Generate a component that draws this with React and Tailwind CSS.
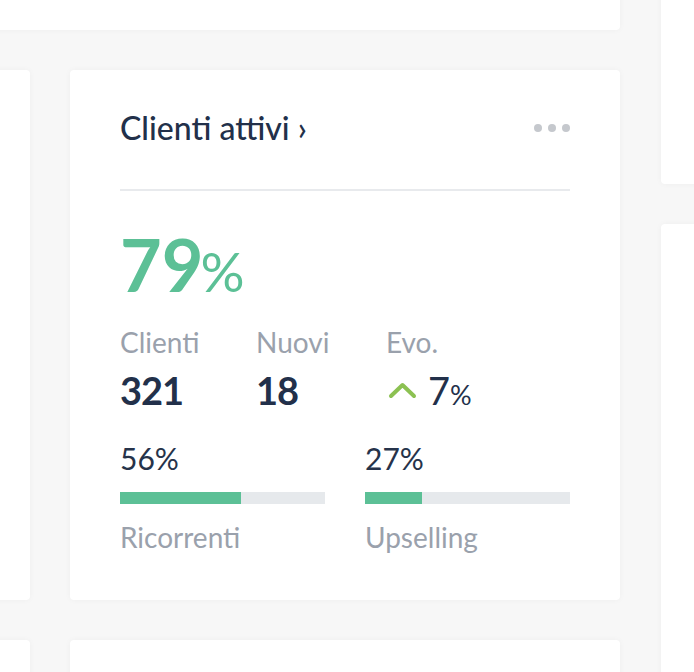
import React from "react";

function Card({ className = "", children }) {
  return (
    <div className={`shrink-0 bg-white rounded-[4px] shadow-[0_0_6px_rgba(0,0,0,0.04)] ${className}`}>
      {children}
    </div>
  );
}

function Bar({ value, label, pct }) {
  return (
    <div className="flex-1">
      <div className="text-[30px] leading-none text-[#26334a]">{value}</div>
      <div className="mt-[19px] h-[12px] bg-[#e6e9ec]">
        <div className="h-full bg-[#5cc096]" style={{ width: pct }} />
      </div>
      <div className="mt-[19px] text-[28px] leading-none text-[#9aa1ac]">{label}</div>
    </div>
  );
}

function Stat({ label, value, width }) {
  return (
    <div className={width}>
      <div className="text-[28px] leading-none text-[#9aa1ac]">{label}</div>
      <div className="mt-[15px] text-[38px] font-bold leading-none tracking-[-1px] text-[#22304a]">{value}</div>
    </div>
  );
}

function ClientiAttivi() {
  return (
    <Card className="w-[550px] h-[530px] px-[50px] pt-[42px]">
      <div className="flex items-start justify-between">
        <div className="text-[32px] font-medium leading-none text-[#22304a]">Clienti attivi ›</div>
        <div className="flex gap-[6px] mt-[12px]">
          <span className="w-[8px] h-[8px] rounded-full bg-[#c5c8cd]" />
          <span className="w-[8px] h-[8px] rounded-full bg-[#c5c8cd]" />
          <span className="w-[8px] h-[8px] rounded-full bg-[#c5c8cd]" />
        </div>
      </div>
      <div className="mt-[45px] h-[2px] bg-[#e8eaed]" />
      <div className="mt-[37px] flex items-baseline text-[#5cc096] leading-none">
        <span className="text-[72px] font-bold">79</span>
        <span className="-ml-[3px] text-[55px]">%</span>
      </div>
      <div className="mt-[28px] flex">
        <Stat label="Clienti" value="321" width="w-[136px]" />
        <Stat label="Nuovi" value="18" width="w-[130px]" />
        <div>
          <div className="text-[28px] leading-none text-[#9aa1ac]">Evo.</div>
          <div className="mt-[15px] flex items-baseline leading-none text-[#22304a]">
            <svg width="29" height="18" viewBox="0 0 29 18" className="ml-[2px] mr-[11px] self-center">
              <path d="M3 15 L14.5 4 L26 15" fill="none" stroke="#8cc152" strokeWidth="4" strokeLinecap="round" strokeLinejoin="round" />
            </svg>
            <span className="text-[38px]">7</span>
            <span className="text-[27px]">%</span>
          </div>
        </div>
      </div>
      <div className="mt-[34px] flex gap-[40px]">
        <Bar value="56%" label="Ricorrenti" pct="59%" />
        <Bar value="27%" label="Upselling" pct="28%" />
      </div>
    </Card>
  );
}

export default function App() {
  return (
    <div
      className="w-[694px] h-[672px] overflow-hidden bg-[#f7f7f7] flex items-start"
      style={{ fontFamily: "Lato, 'Open Sans', sans-serif" }}
    >
      <div className="ml-[-520px] w-[1140px] shrink-0 flex flex-col gap-[40px]">
        <Card className="h-[100px] mt-[-70px]" />
        <div className="flex gap-[40px]">
          <Card className="w-[550px] h-[530px]" />
          <ClientiAttivi />
        </div>
        <div className="flex gap-[40px]">
          <Card className="w-[550px] h-[200px]" />
          <Card className="w-[550px] h-[200px]" />
        </div>
      </div>
      <div className="ml-[41px] w-[300px] shrink-0 flex flex-col gap-[40px]">
        <Card className="h-[200px] mt-[-16px]" />
        <Card className="h-[500px]" />
      </div>
    </div>
  );
}
